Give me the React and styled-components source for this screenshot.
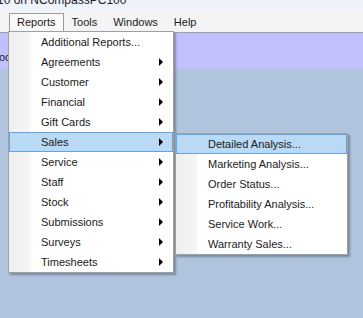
import React from "react";
import styled, { createGlobalStyle } from "styled-components";

const GlobalStyle = createGlobalStyle`
  html, body {
    margin: 0;
    padding: 0;
    background: #b0c4de;
  }
  body {
    font-family: "Liberation Sans", Arial, sans-serif;
    font-size: 11px;
    color: #1a1a1a;
  }
`;

const reportItems = [
  { label: "Additional Reports...", sub: false },
  { label: "Agreements", sub: true },
  { label: "Customer", sub: true },
  { label: "Financial", sub: true },
  { label: "Gift Cards", sub: true },
  { label: "Sales", sub: true, active: true },
  { label: "Service", sub: true },
  { label: "Staff", sub: true },
  { label: "Stock", sub: true },
  { label: "Submissions", sub: true },
  { label: "Surveys", sub: true },
  { label: "Timesheets", sub: true },
];

const salesItems = [
  "Detailed Analysis...",
  "Marketing Analysis...",
  "Order Status...",
  "Profitability Analysis...",
  "Service Work...",
  "Warranty Sales...",
];

const App = () => {
  return (
    <Screen>
      <GlobalStyle />
      <TitleStrip>
        <span>10 on NCompassPC100</span>
      </TitleStrip>
      <MenuBar>
        <MenuTitle $open>Reports</MenuTitle>
        <MenuTitle>Tools</MenuTitle>
        <MenuTitle>Windows</MenuTitle>
        <MenuTitle>Help</MenuTitle>
      </MenuBar>
      <Workspace>
        <ChildBand>
          <ChildLabel>oc</ChildLabel>
        </ChildBand>
      </Workspace>

      <Dropdown $left={8} $top={31} $width={166}>
        {reportItems.map((item) => (
          <MenuItem key={item.label} $active={item.active}>
            <span>{item.label}</span>
            {item.sub && <Arrow />}
          </MenuItem>
        ))}
      </Dropdown>

      <Dropdown $left={175} $top={133} $width={173}>
        {salesItems.map((label, i) => (
          <MenuItem key={label} $active={i === 0}>
            <span>{label}</span>
          </MenuItem>
        ))}
      </Dropdown>
    </Screen>
  );
};

export default App;

const Screen = styled.div`
  position: relative;
  width: 363px;
  height: 318px;
  overflow: hidden;
  background: #b0c4de;
`;

const TitleStrip = styled.div`
  height: 11px;
  overflow: hidden;
  background: #eef2fb;
  font-size: 12px;
  line-height: 12px;
  color: #222;
  & > span {
    display: block;
    margin: -6px 0 0 -3px;
  }
`;

const MenuBar = styled.div`
  display: flex;
  align-items: flex-end;
  height: 21px;
  padding-left: 9px;
  background: #f4f4f4;
  border-bottom: 1px solid #a0a0a0;
`;

const MenuTitle = styled.div`
  height: 18px;
  line-height: 17px;
  padding: 0 7px;
  border: 1px solid ${(p) => (p.$open ? "#9a9a9a" : "transparent")};
  border-bottom: none;
  background: ${(p) => (p.$open ? "#f9f9f9" : "transparent")};
  color: #1a1a1a;
`;

const Workspace = styled.div`
  display: flex;
  flex-direction: column;
`;

const ChildBand = styled.div`
  height: 36px;
  background: #c0c0fd;
  display: flex;
  align-items: flex-end;
  padding-bottom: 6px;
  box-sizing: border-box;
`;

const ChildLabel = styled.span`
  margin-left: -1px;
  color: #1a1a1a;
`;

const Dropdown = styled.div`
  position: absolute;
  left: ${(p) => p.$left}px;
  top: ${(p) => p.$top}px;
  width: ${(p) => p.$width}px;
  box-sizing: border-box;
  border: 1px solid #a0a0a0;
  background: linear-gradient(
    to right,
    #efefef 0,
    #f6f6f6 21px,
    #ffffff 22px
  );
  box-shadow: 2px 2px 2px rgba(0, 0, 0, 0.3);
  display: flex;
  flex-direction: column;
`;

const MenuItem = styled.div`
  position: relative;
  display: flex;
  align-items: center;
  justify-content: space-between;
  height: 20px;
  box-sizing: border-box;
  padding: 0 9px 0 31px;
  border: 1px solid ${(p) => (p.$active ? "#62a4e4" : "transparent")};
  background: ${(p) => (p.$active ? "#b9d9f5" : "transparent")};
  color: #1a1a1a;
  white-space: nowrap;
`;

const Arrow = styled.span`
  width: 0;
  height: 0;
  border-top: 4px solid transparent;
  border-bottom: 4px solid transparent;
  border-left: 4px solid #000;
`;
